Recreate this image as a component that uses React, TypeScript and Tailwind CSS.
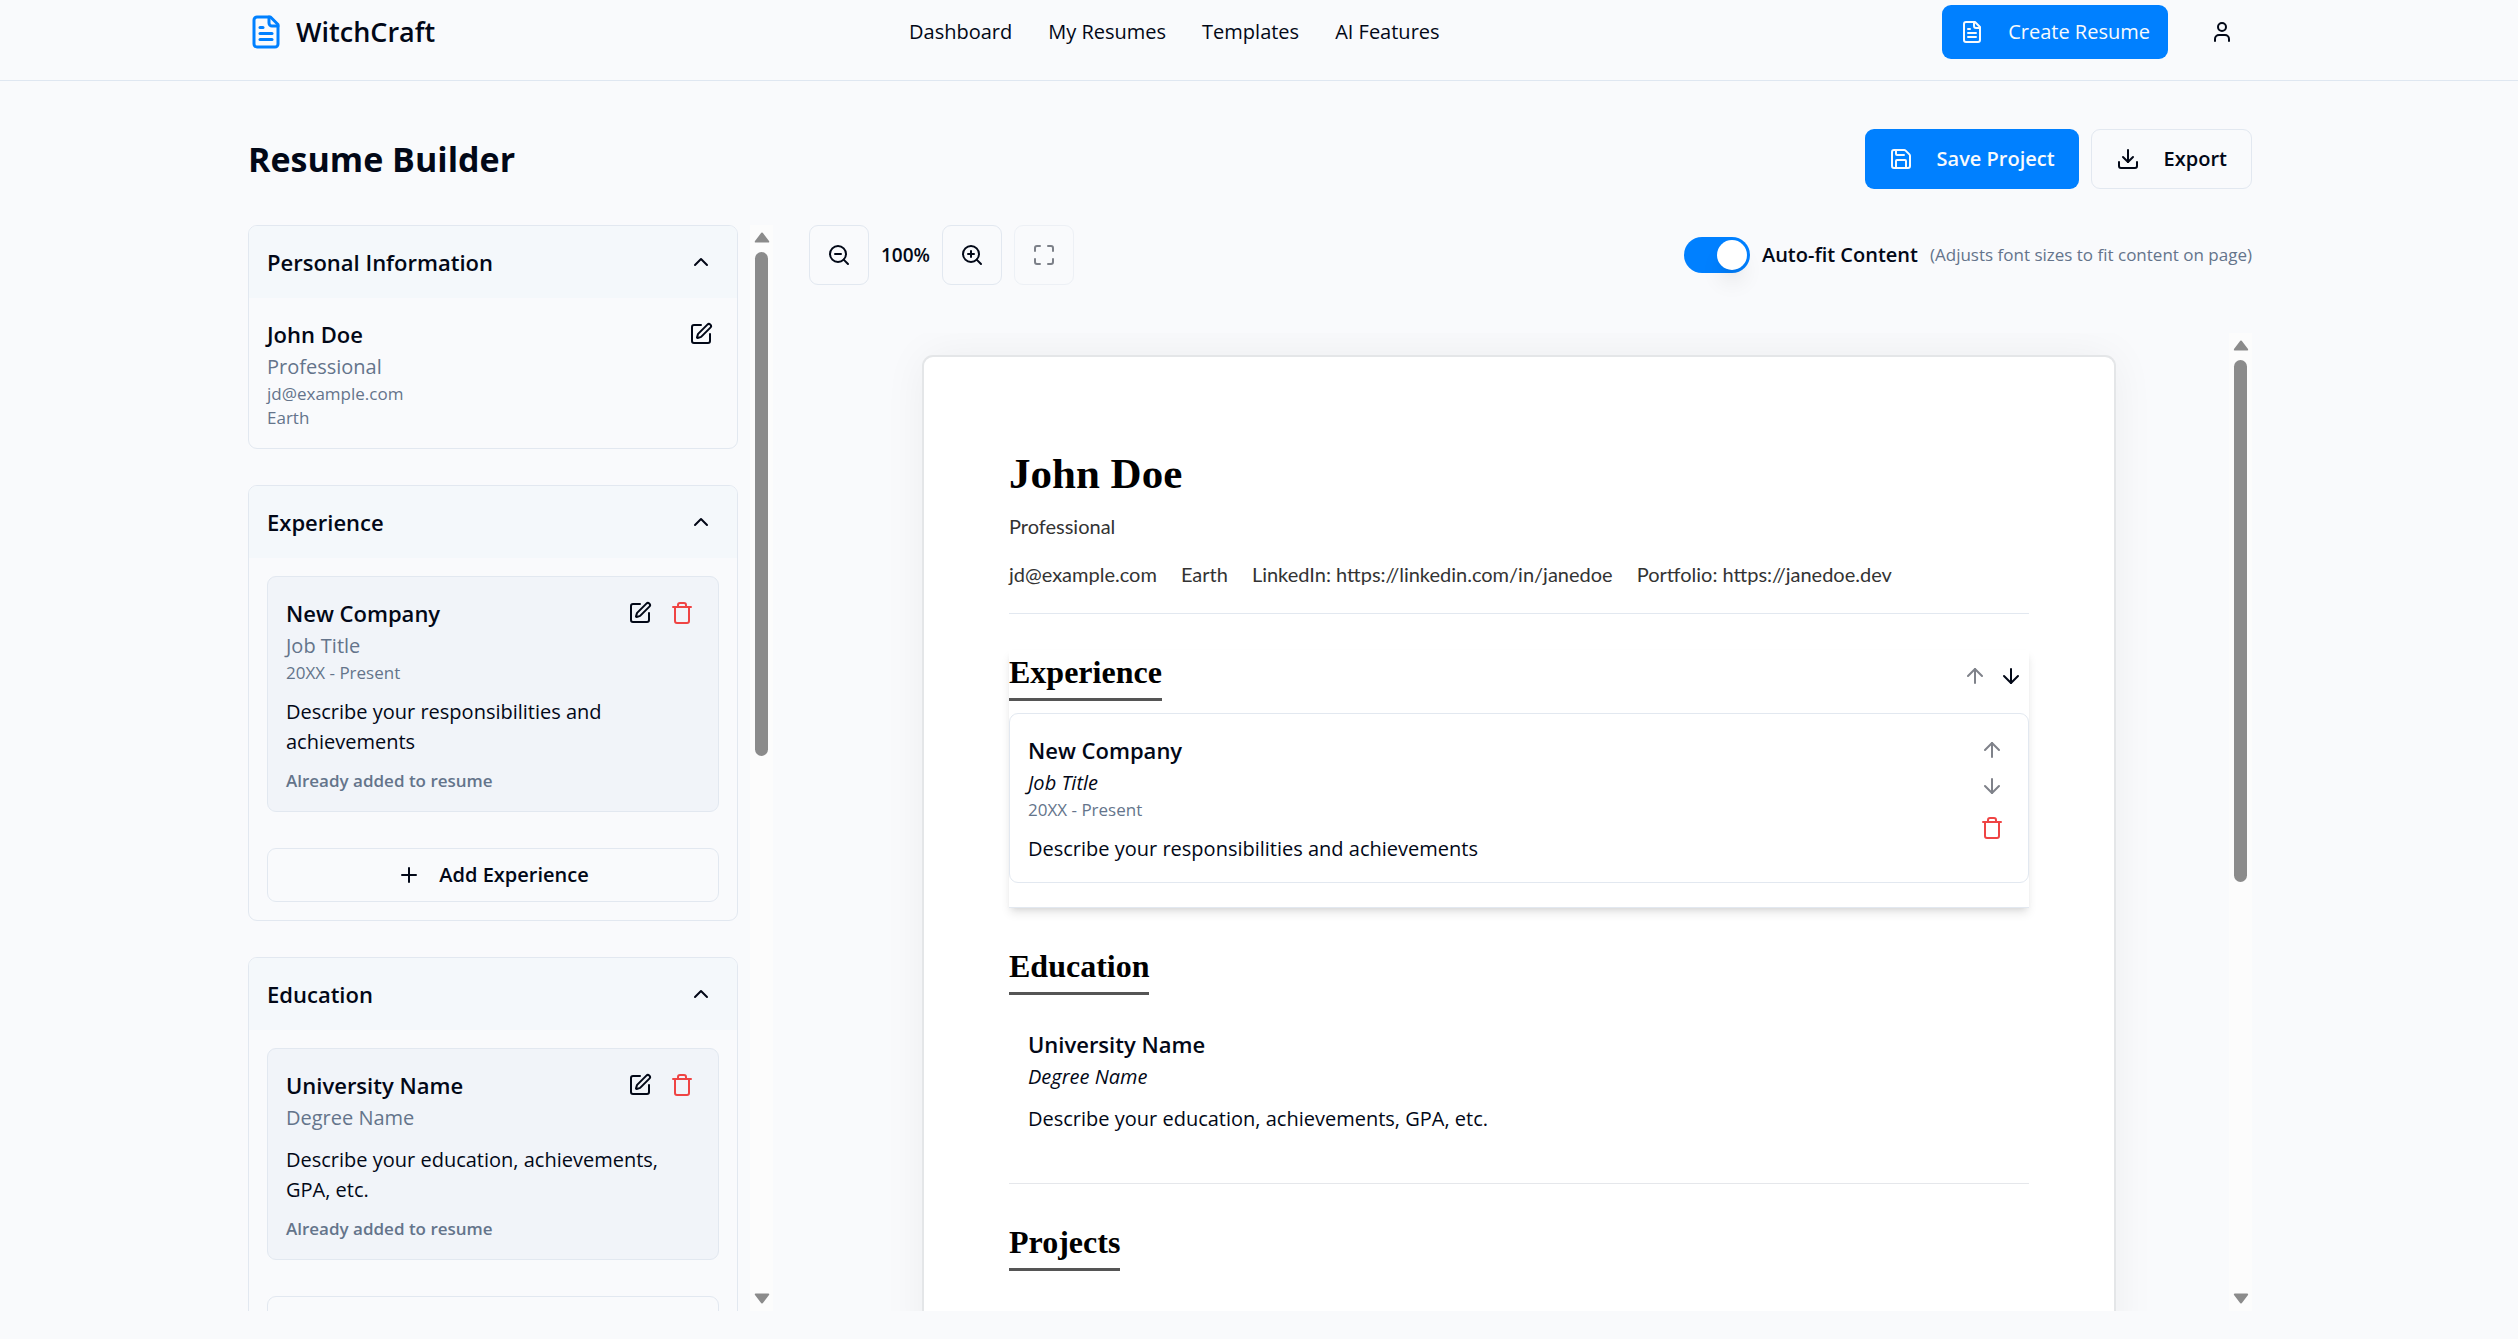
import React, { useState } from "react";
import {
  ArrowDown,
  ArrowUp,
  ChevronUp,
  Download,
  Maximize,
  Plus,
  Save,
  SquarePen,
  Trash,
  User,
  ZoomIn,
  ZoomOut,
} from "lucide-react";

type Entry = {
  title: string;
  subtitle: string;
  period?: string;
  description: string;
};

const experience: Entry = {
  title: "New Company",
  subtitle: "Job Title",
  period: "20XX - Present",
  description: "Describe your responsibilities and achievements",
};

const education: Entry = {
  title: "University Name",
  subtitle: "Degree Name",
  description: "Describe your education, achievements, GPA, etc.",
};

const navItems = ["Dashboard", "My Resumes", "Templates", "AI Features"];

const contacts = [
  "jd@example.com",
  "Earth",
  "LinkedIn: https://linkedin.com/in/janedoe",
  "Portfolio: https://janedoe.dev",
];

function FileTextIcon({ className }: { className: string }) {
  return (
    <svg
      viewBox="0 0 24 24"
      fill="none"
      stroke="currentColor"
      strokeWidth="2"
      strokeLinecap="round"
      strokeLinejoin="round"
      className={className}
      aria-hidden="true"
    >
      <path d="M15 2H6a2 2 0 0 0-2 2v16a2 2 0 0 0 2 2h12a2 2 0 0 0 2-2V7Z" />
      <path d="M14 2v4a2 2 0 0 0 2 2h4" />
      <path d="M10 9H8" />
      <path d="M16 13H8" />
      <path d="M16 17H8" />
    </svg>
  );
}

function IconButton({
  label,
  danger = false,
  disabled = false,
  children,
}: {
  label: string;
  danger?: boolean;
  disabled?: boolean;
  children: React.ReactNode;
}) {
  return (
    <button
      type="button"
      aria-label={label}
      disabled={disabled}
      className={`flex size-9 items-center justify-center rounded-md disabled:opacity-50 ${
        danger ? "text-[#ef4444]" : ""
      }`}
    >
      {children}
    </button>
  );
}

function ToolButton({
  label,
  disabled = false,
  children,
}: {
  label: string;
  disabled?: boolean;
  children: React.ReactNode;
}) {
  return (
    <button
      type="button"
      aria-label={label}
      disabled={disabled}
      className="flex size-[60px] items-center justify-center rounded-[9px] border border-[#e2e8f0] disabled:opacity-50"
    >
      {children}
    </button>
  );
}

function ScrollTrack({ tall }: { tall: boolean }) {
  return (
    <div
      aria-hidden="true"
      className="flex w-[23px] shrink-0 flex-col items-center bg-[#fcfcfc] py-[7px]"
    >
      <svg viewBox="0 0 16 11" className="h-[11px] w-4 shrink-0 fill-[#8b8b8b]">
        <path d="M8 0.5 Q8.8 0.5 9.3 1.4 L15 9 Q15.8 10.6 14.2 10.6 H1.8 Q0.2 10.6 1 9 L6.7 1.4 Q7.2 0.5 8 0.5Z" />
      </svg>
      <div
        className={`mt-[9px] w-[13px] rounded-full bg-[#8b8b8b] ${
          tall ? "h-[522px]" : "h-[504px]"
        }`}
      />
      <svg
        viewBox="0 0 16 11"
        className="mt-auto h-[11px] w-4 shrink-0 fill-[#8b8b8b]"
      >
        <path d="M8 10.5 Q8.8 10.5 9.3 9.6 L15 2 Q15.8 0.4 14.2 0.4 H1.8 Q0.2 0.4 1 2 L6.7 9.6 Q7.2 10.5 8 10.5Z" />
      </svg>
    </div>
  );
}

function Panel({
  title,
  children,
}: {
  title: string;
  children: React.ReactNode;
}) {
  const [open, setOpen] = useState(true);
  return (
    <section className="shrink-0 overflow-hidden rounded-[9px] border border-[#e2e8f0]">
      <h2>
        <button
          type="button"
          aria-expanded={open}
          onClick={() => setOpen(!open)}
          className="flex h-[72px] w-full items-center justify-between bg-[#f4f8fb] pr-6 pl-[18px] text-[22px] font-semibold"
        >
          {title}
          <ChevronUp className="size-6" />
        </button>
      </h2>
      {open && <div className="p-[18px]">{children}</div>}
    </section>
  );
}

function LibraryEntry({ entry }: { entry: Entry }) {
  return (
    <article className="rounded-[9px] border border-[#e2e8f0] bg-[#f1f4f9] p-[18px]">
      <div className="flex items-start justify-between">
        <div>
          <h3 className="text-[22px] leading-9 font-semibold">{entry.title}</h3>
          <p className="text-[20px] leading-[30px] text-[#64748b]">
            {entry.subtitle}
          </p>
          {entry.period && (
            <p className="text-[17px] leading-6 text-[#64748b]">
              {entry.period}
            </p>
          )}
        </div>
        <div className="flex gap-1.5">
          <IconButton label={`Edit ${entry.title}`}>
            <SquarePen className="size-6" />
          </IconButton>
          <IconButton label={`Delete ${entry.title}`} danger>
            <Trash className="size-6" />
          </IconButton>
        </div>
      </div>
      <p className="mt-3 text-[20px] leading-[30px]">{entry.description}</p>
      <p className="mt-3 text-[17px] leading-6 font-semibold text-[#64748b]">
        Already added to resume
      </p>
    </article>
  );
}

function AddButton({ label }: { label: string }) {
  return (
    <button
      type="button"
      className="mt-9 flex h-[54px] w-full items-center justify-center gap-[18px] rounded-[9px] border border-[#e2e8f0] text-[20px] font-semibold"
    >
      <Plus className="size-6" />
      {label}
    </button>
  );
}

function ResumeHeading({ children }: { children: React.ReactNode }) {
  return (
    <h3 className="border-b-[3px] border-[#555555] pb-[3px] font-['Liberation_Serif',serif] text-[32px] leading-[45px] font-bold text-black">
      {children}
    </h3>
  );
}

function ResumeEntry({
  entry,
  active = false,
}: {
  entry: Entry;
  active?: boolean;
}) {
  return (
    <article
      className={`mt-3 flex min-h-[152px] justify-between rounded-[9px] border p-[18px] ${
        active ? "border-[#e2e8f0]" : "border-transparent"
      }`}
    >
      <div>
        <h4 className="text-[22px] leading-9 font-semibold">{entry.title}</h4>
        <p className="text-[20px] leading-[30px] italic">{entry.subtitle}</p>
        {entry.period && (
          <p className="text-[17px] leading-6 text-[#64748b]">{entry.period}</p>
        )}
        <p className="mt-3 text-[20px] leading-[30px]">{entry.description}</p>
      </div>
      {active && (
        <div className="flex flex-col">
          <IconButton label="Move entry up" disabled>
            <ArrowUp className="size-6" />
          </IconButton>
          <IconButton label="Move entry down" disabled>
            <ArrowDown className="size-6" />
          </IconButton>
          <div className="mt-1.5">
            <IconButton label="Remove entry" danger>
              <Trash className="size-6" />
            </IconButton>
          </div>
        </div>
      )}
    </article>
  );
}

function Header() {
  return (
    <header className="border-b border-[#dfe7f1] pr-[18px]">
      <div className="mx-auto grid h-20 max-w-[2004px] grid-cols-[661px_1fr_auto] items-center pb-4">
        <a href="#home" className="flex items-center gap-3">
          <FileTextIcon className="size-9 text-[#0080ff]" />
          <span className="text-[27px] leading-9 font-semibold">
            WitchCraft
          </span>
        </a>
        <nav className="flex gap-9 text-[20px] leading-[30px] font-medium">
          {navItems.map((item) => (
            <a key={item} href={`#${item.toLowerCase().replace(" ", "-")}`}>
              {item}
            </a>
          ))}
        </nav>
        <div className="flex items-center gap-6">
          <button
            type="button"
            className="flex h-[54px] items-center gap-6 rounded-[9px] bg-[#0080ff] px-[18px] text-[20px] font-medium text-[#f8fafc]"
          >
            <FileTextIcon className="size-6" />
            Create Resume
          </button>
          <button
            type="button"
            aria-label="Account"
            className="flex h-[54px] w-[60px] items-center justify-center"
          >
            <User className="size-6" />
          </button>
        </div>
      </div>
    </header>
  );
}

function Sidebar() {
  return (
    <aside className="flex min-h-0 w-[525px] shrink-0 gap-3">
      <div className="flex flex-1 flex-col gap-9 overflow-hidden">
        <Panel title="Personal Information">
          <div className="flex items-start justify-between">
            <div>
              <h3 className="text-[22px] leading-9 font-semibold">John Doe</h3>
              <p className="text-[20px] leading-[30px] text-[#64748b]">
                Professional
              </p>
              <p className="text-[17px] leading-6 text-[#64748b]">
                jd@example.com
              </p>
              <p className="text-[17px] leading-6 text-[#64748b]">Earth</p>
            </div>
            <IconButton label="Edit personal information">
              <SquarePen className="size-6" />
            </IconButton>
          </div>
        </Panel>
        <Panel title="Experience">
          <LibraryEntry entry={experience} />
          <AddButton label="Add Experience" />
        </Panel>
        <Panel title="Education">
          <LibraryEntry entry={education} />
          <AddButton label="Add Education" />
        </Panel>
      </div>
      <ScrollTrack tall={false} />
    </aside>
  );
}

function Toolbar() {
  return (
    <div className="flex items-center justify-between">
      <div className="flex items-center gap-3">
        <ToolButton label="Zoom out">
          <ZoomOut className="size-6" />
        </ToolButton>
        <span className="text-[19px] font-semibold">100%</span>
        <ToolButton label="Zoom in">
          <ZoomIn className="size-6" />
        </ToolButton>
        <ToolButton label="Reset zoom" disabled>
          <Maximize className="size-6" />
        </ToolButton>
      </div>
      <div className="flex items-center gap-3">
        <input
          id="auto-fit"
          type="checkbox"
          role="switch"
          defaultChecked
          className="flex h-9 w-[66px] appearance-none items-center rounded-full bg-[#e2e8f0] p-[3px] before:size-[30px] before:rounded-full before:bg-white before:shadow-[0_15px_22px_-4px_rgba(0,0,0,0.1),0_6px_9px_-6px_rgba(0,0,0,0.1)] checked:justify-end checked:bg-[#0080ff]"
        />
        <label htmlFor="auto-fit" className="text-[20px] font-semibold">
          Auto-fit Content
        </label>
        <span className="text-[17px] text-[#64748b]">
          (Adjusts font sizes to fit content on page)
        </span>
      </div>
    </div>
  );
}

function ResumePage() {
  return (
    <div className="w-[1190px] shrink-0 rounded-[9px] bg-white px-[85px] py-[85px] shadow-[0_0_0_2px_#e4e6e8,0_0_45px_rgba(0,0,0,0.06)]">
      <div className="border-b border-[#e2e8f0] pb-6">
        <h2 className="font-['Liberation_Serif',serif] text-[43px] leading-[63px] font-bold text-black">
          John Doe
        </h2>
        <p className="mt-1.5 font-[Lato,sans-serif] text-[20px] leading-[30px] text-[#333333]">
          Professional
        </p>
        <ul className="mt-[18px] flex gap-6 font-[Lato,sans-serif] text-[20px] leading-[30px] text-[#333333]">
          {contacts.map((contact) => (
            <li key={contact}>{contact}</li>
          ))}
        </ul>
      </div>

      <section className="mt-9 border-b border-[#e2e8f0] bg-white pb-6 shadow-[0_6px_9px_-1px_rgba(0,0,0,0.1),0_3px_6px_-3px_rgba(0,0,0,0.1)]">
        <div className="flex items-center justify-between">
          <ResumeHeading>Experience</ResumeHeading>
          <div className="flex">
            <IconButton label="Move section up" disabled>
              <ArrowUp className="size-6" />
            </IconButton>
            <IconButton label="Move section down">
              <ArrowDown className="size-6" />
            </IconButton>
          </div>
        </div>
        <ResumeEntry entry={experience} active />
      </section>

      <section className="mt-9 border-b border-[#e5e7eb] pb-6">
        <div className="flex">
          <ResumeHeading>Education</ResumeHeading>
        </div>
        <ResumeEntry entry={education} />
      </section>

      <section className="mt-9">
        <div className="flex">
          <ResumeHeading>Projects</ResumeHeading>
        </div>
      </section>
    </div>
  );
}

export default function App() {
  return (
    <div className="flex h-screen flex-col overflow-hidden bg-[#f9fafc] font-['Open_Sans',sans-serif] text-[#020817]">
      <Header />
      <main className="flex min-h-0 flex-1 flex-col pt-12 pr-[18px] pb-7">
        <div className="mx-auto flex min-h-0 w-full max-w-[2004px] flex-1 flex-col gap-9">
          <div className="flex items-center justify-between">
            <h1 className="text-[34px] leading-[60px] font-bold">
              Resume Builder
            </h1>
            <div className="flex gap-3 text-[20px]">
              <button
                type="button"
                className="flex h-[60px] items-center gap-6 rounded-[9px] bg-[#0080ff] px-6 font-semibold text-[#f8fafc]"
              >
                <Save className="size-6" />
                Save Project
              </button>
              <button
                type="button"
                className="flex h-[60px] items-center gap-6 rounded-[9px] border border-[#e2e8f0] px-6 font-semibold"
              >
                <Download className="size-6" />
                Export
              </button>
            </div>
          </div>
          <div className="flex min-h-0 flex-1 gap-9">
            <Sidebar />
            <div className="flex min-w-0 flex-1 flex-col gap-12">
              <Toolbar />
              <div className="flex min-h-0 flex-1">
                <div className="flex flex-1 items-start justify-center overflow-hidden pt-6">
                  <ResumePage />
                </div>
                <ScrollTrack tall />
              </div>
            </div>
          </div>
        </div>
      </main>
    </div>
  );
}
